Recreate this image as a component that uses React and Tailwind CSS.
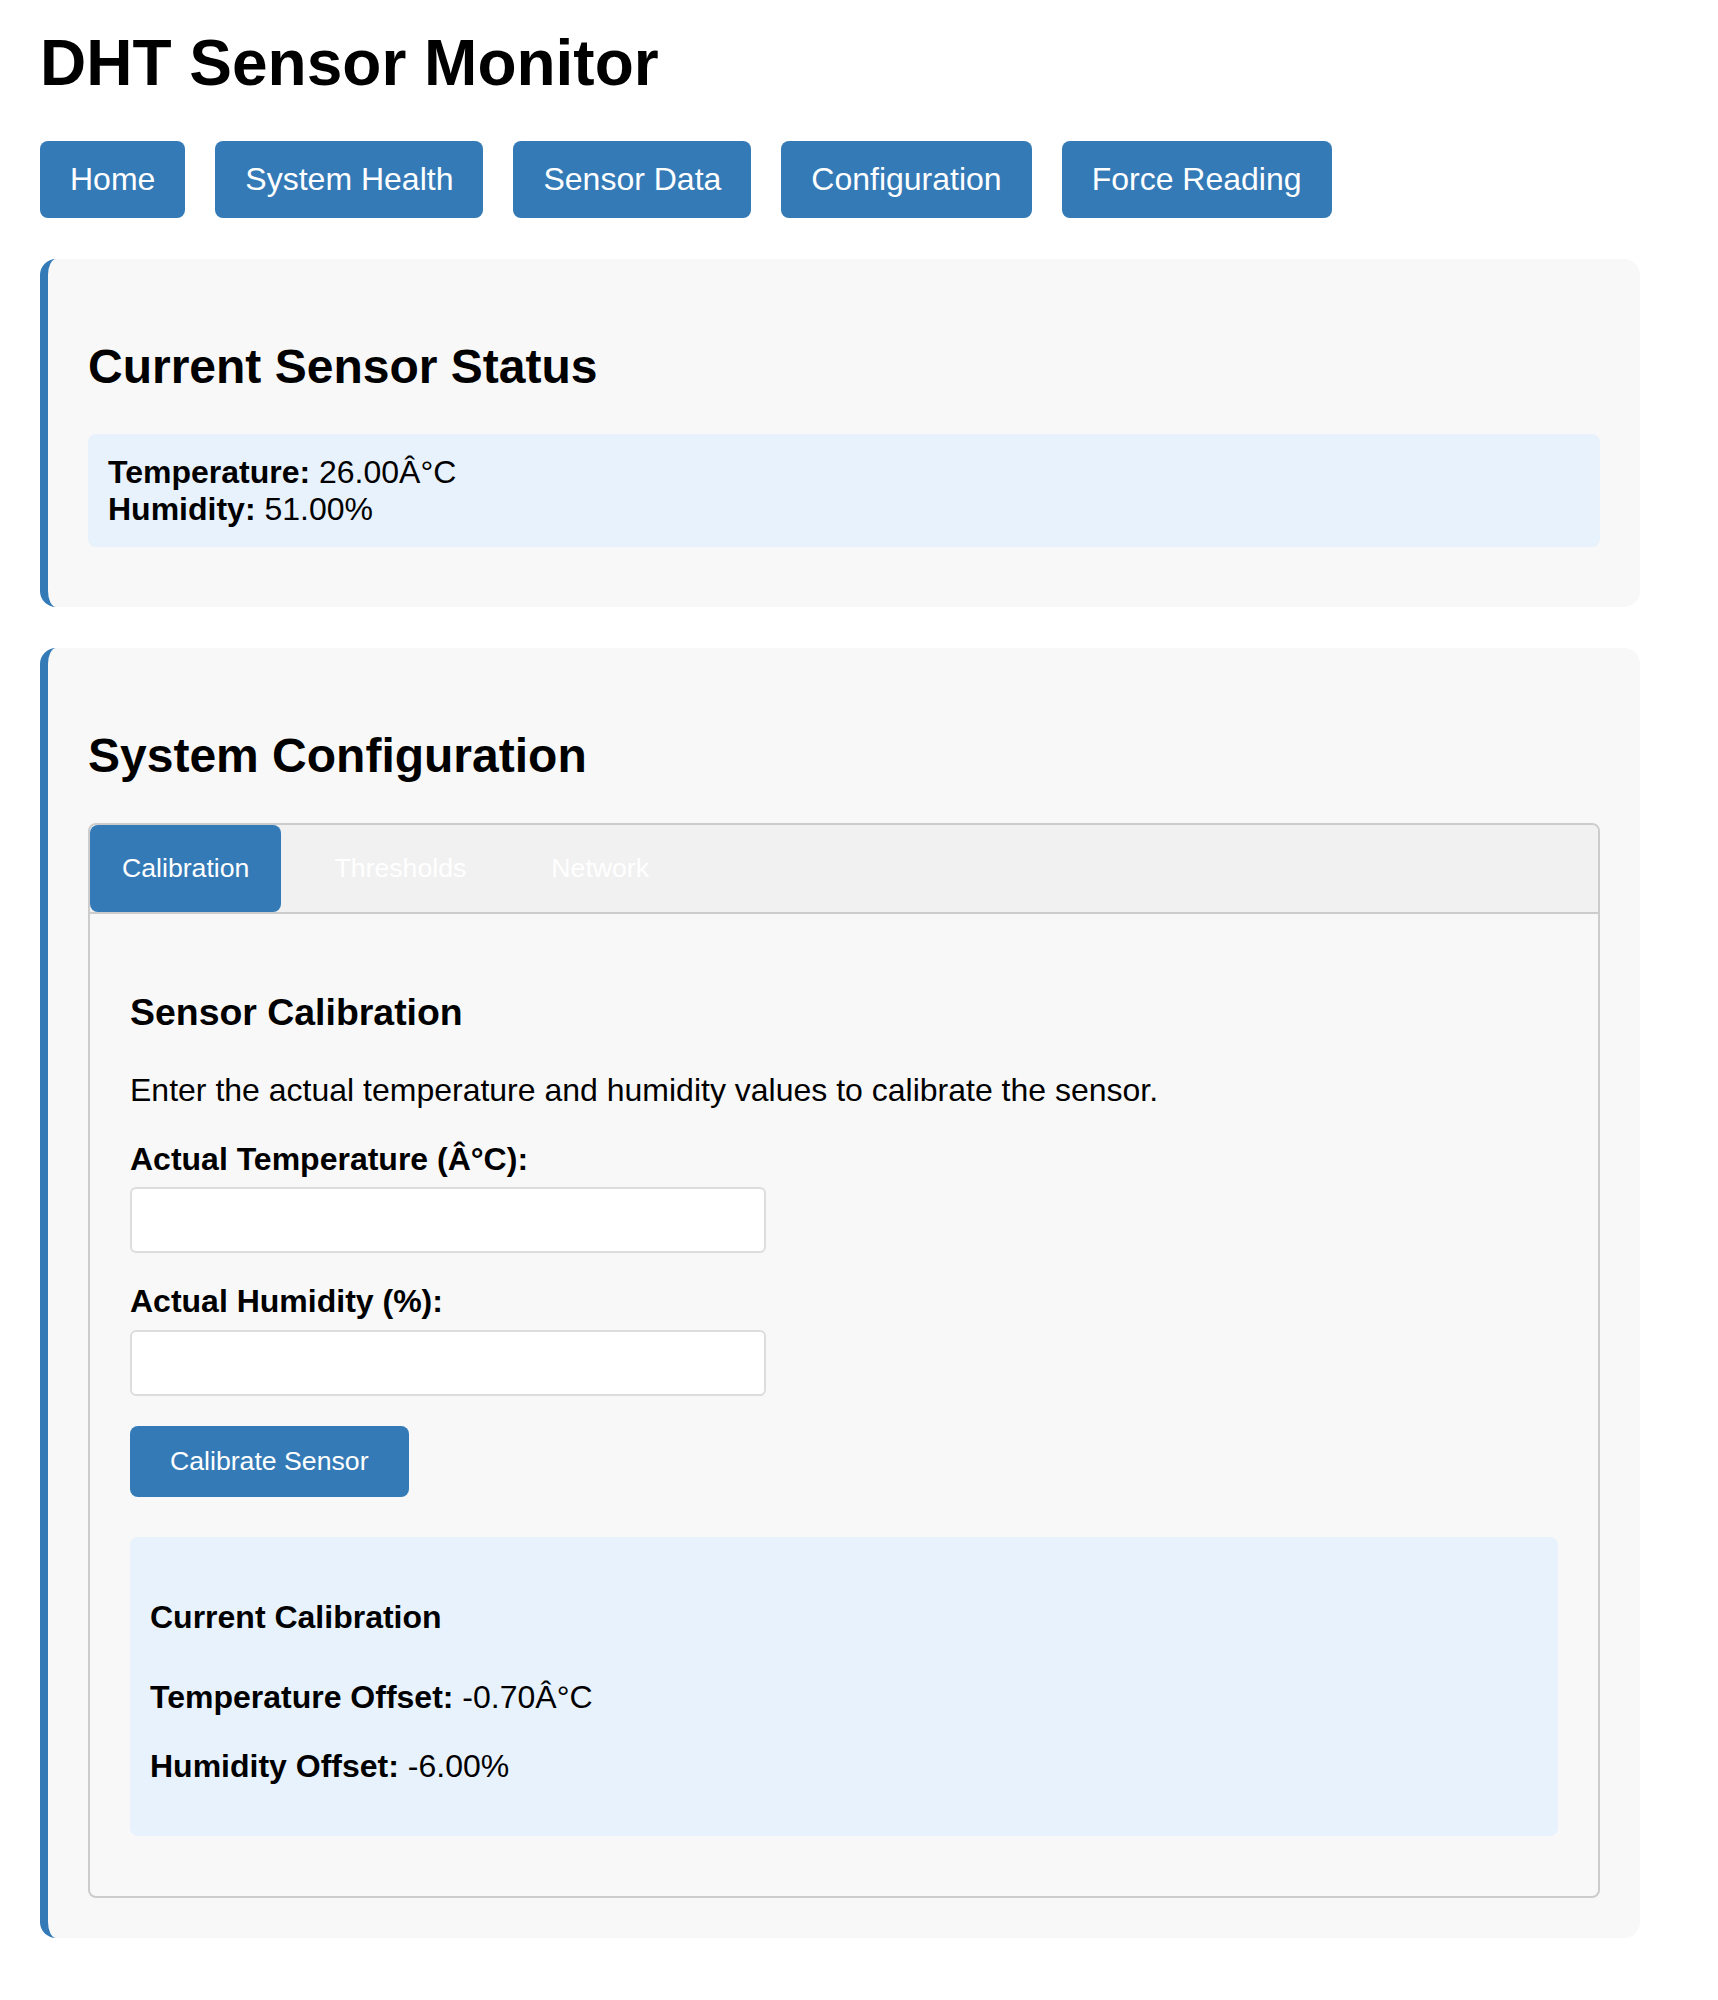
import React from "react";

const navItems = ["Home", "System Health", "Sensor Data", "Configuration", "Force Reading"];

function Card({ children, className = "" }) {
  return (
    <section
      className={
        "rounded-[16px] border-l-[8px] border-[#337ab7] bg-[#f8f8f8] px-[40px] pt-[40px] pb-[40px] " +
        className
      }
    >
      {children}
    </section>
  );
}

export default function App() {
  return (
    <div className="min-h-[2000px] bg-white font-['Liberation_Sans',Arial,Helvetica,sans-serif] text-black">
      <div className="w-[1640px] pl-[40px] pt-[26px]">
        <h1 className="mb-[41px] text-[64px] font-bold leading-[74px]">DHT Sensor Monitor</h1>

        <nav className="flex gap-[30px]">
          {navItems.map((item) => (
            <a
              key={item}
              href="#"
              className="rounded-[8px] bg-[#337ab7] px-[30px] py-[20px] text-[32px] leading-[36.8px] text-white"
            >
              {item}
            </a>
          ))}
        </nav>

        <Card className="mt-[41px]">
          <h2 className="mt-[40px] mb-[40px] text-[48px] font-bold leading-[55px]">Current Sensor Status</h2>
          <div className="mb-[20px] rounded-[8px] bg-[#e8f2fc] p-[20px] text-[32px] leading-[36.8px]">
            <div>
              <span className="font-bold">Temperature:</span> 26.00Â°C
            </div>
            <div>
              <span className="font-bold">Humidity:</span> 51.00%
            </div>
          </div>
        </Card>

        <Card className="mt-[41px]">
          <h2 className="mt-[40px] mb-[40px] text-[48px] font-bold leading-[55px]">System Configuration</h2>

          <div className="rounded-[8px] border-2 border-[#cccccc] bg-[#f8f8f8]">
            <div className="flex gap-[21px] rounded-t-[6px] border-b-2 border-[#cccccc] bg-[#f1f1f1]">
              <button className="rounded-[8px] bg-[#337ab7] px-[32px] py-[28px] text-[26.67px] leading-[30.67px] text-white">
                Calibration
              </button>
              <button className="px-[32px] py-[28px] text-[26.67px] leading-[30.67px] text-white">
                Thresholds
              </button>
              <button className="px-[32px] py-[28px] text-[26.67px] leading-[30.67px] text-white">
                Network
              </button>
            </div>

            <div className="px-[40px] pt-[40px] pb-[40px]">
              <h3 className="mt-[37.4px] mb-[37.4px] text-[37.44px] font-bold leading-[43px]">Sensor Calibration</h3>
              <p className="mb-[32px] text-[32px] leading-[36.8px]">
                Enter the actual temperature and humidity values to calibrate the sensor.
              </p>

              <label className="mb-[10px] block text-[32px] font-bold leading-[36.8px]">
                Actual Temperature (Â°C):
              </label>
              <input
                type="number"
                className="mb-[30px] block h-[66px] w-[636px] rounded-[6px] border-2 border-[#dddddd] bg-white px-[16px] text-[26.67px] outline-none"
              />

              <label className="mb-[10px] block text-[32px] font-bold leading-[36.8px]">Actual Humidity (%):</label>
              <input
                type="number"
                className="mb-[30px] block h-[66px] w-[636px] rounded-[6px] border-2 border-[#dddddd] bg-white px-[16px] text-[26.67px] outline-none"
              />

              <button className="rounded-[8px] bg-[#337ab7] px-[40px] py-[20px] text-[26.67px] leading-[30.67px] text-white">
                Calibrate Sensor
              </button>

              <div className="mt-[40px] mb-[20px] rounded-[8px] bg-[#e8f2fc] px-[20px] py-[20px] text-[32px] leading-[36.8px]">
                <h4 className="mt-[42.56px] mb-[42.56px] font-bold">Current Calibration</h4>
                <p className="my-[32px]">
                  <span className="font-bold">Temperature Offset:</span> -0.70Â°C
                </p>
                <p className="my-[32px]">
                  <span className="font-bold">Humidity Offset:</span> -6.00%
                </p>
              </div>
            </div>
          </div>
        </Card>
      </div>
    </div>
  );
}
